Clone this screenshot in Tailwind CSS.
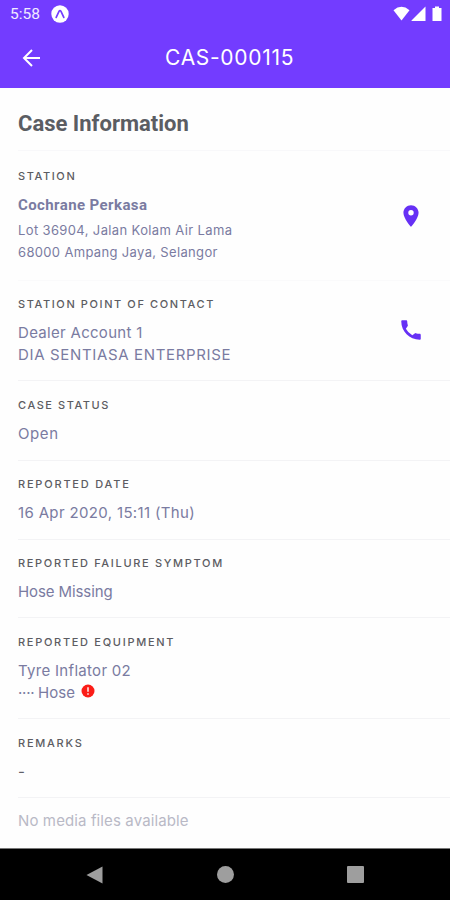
<!DOCTYPE html>
<html lang="en">
<head>
<meta charset="utf-8">
<meta name="viewport" content="width=device-width, initial-scale=1">
<title>CAS-000115</title>
<script src="https://cdn.jsdelivr.net/npm/@tailwindcss/browser@4"></script>
</head>
<body class="bg-white font-['Inter',sans-serif]">
<div class="flex h-[900px] w-[450px] flex-col overflow-hidden bg-[#fefefe]">
  <header class="h-[88px] shrink-0 bg-[#733cff] text-white">
    <div class="flex h-7 items-center pr-[7px] pl-[10px]">
      <span class="font-['Roboto',sans-serif] text-[15.5px] leading-7 text-white/90"><span>5:58</span></span>
      <svg class="ml-[11px]" width="18" height="18" viewBox="0 0 18 18"><circle cx="9" cy="9" r="8.7" fill="#fff"/><path d="M5.2 12.4 8.1 6.2Q9 4.8 9.9 6.2L12.8 12.4" fill="none" stroke="#733cff" stroke-width="1.7" stroke-linecap="round"/></svg>
      <svg class="ml-auto" width="50" height="18" viewBox="0 0 50 18" fill="#fff"><path d="M0.5 5.2Q8.5-1.5 16.500 5.200L8.500 15.500Z"/><path d="M18.500 16V15.500L32.500 1.500V16Z"/><path d="M42 1.500H46V3H48.500V16H39.500V3H42Z"/></svg>
    </div>
    <div class="flex h-[60px] items-center pl-[20px]">
      <svg width="24" height="24" viewBox="0 0 24 24" fill="none" stroke="#fff" stroke-width="2"><path d="M20 12H4M12 4 4 12 12 20"/></svg>
      <h1 class="ml-[121px] text-[21px] font-normal tracking-[0.7px]"><span>CAS-000115</span></h1>
    </div>
  </header>
  <main class="h-[760px] shrink-0 text-[15px] leading-[22px] text-[#7a7ba1]">
    <div class="ml-[18px] flex h-[63px] items-center border-b border-[#f8f8fa] pt-[9px] font-['Roboto',sans-serif] text-[22px] font-bold text-[#5b5d63]"><h2>Case Information</h2></div>
    <section class="ml-[18px] flex h-[130px] border-b border-[#fafafb] pt-[17px]">
      <div>
        <h3 class="text-[11px] leading-4 font-medium tracking-[1.6px] text-[#5c5c62]"><span>STATION</span></h3>
        <p class="mt-[10px] font-['Roboto',sans-serif] font-bold tracking-[0.4px]"><span>Cochrane Perkasa</span></p>
        <p class="mt-[3px] text-[13px] tracking-[0.37px]"><span>Lot 36904, Jalan Kolam Air Lama</span></p>
        <p class="text-[13px] tracking-[0.34px]"><span>68000 Ampang Jaya, Selangor</span></p>
      </div>
      <svg class="mt-[35px] mr-[26px] ml-auto" width="26" height="26" viewBox="0 0 24 24" fill="#6630f5"><path d="M12 2C8.130 2 5 5.130 5 9c0 5.250 7 13 7 13s7-7.750 7-13c0-3.870-3.130-7-7-7zm0 9.500a2.500 2.500 0 1 1 0-5 2.500 2.500 0 0 1 0 5z"/></svg>
    </section>
    <section class="ml-[18px] flex h-[100px] border-b border-[#f3f3f5] pt-[15px]">
      <div>
        <h3 class="text-[11px] leading-4 font-medium tracking-[1.6px] text-[#5c5c62]"><span>STATION POINT OF CONTACT</span></h3>
        <p class="mt-[10px] tracking-[0.3px]"><span>Dealer Account 1</span></p>
        <p class="tracking-[0.65px]"><span>DIA SENTIASA ENTERPRISE</span></p>
      </div>
      <svg class="mt-[21px] mr-[26px] ml-auto" width="26" height="26" viewBox="0 0 24 24" fill="#6630f5"><path d="M20 15.500c-1.250 0-2.450-.2-3.570-.57a1 1 0 0 0-1.020.24l-2.200 1.600A15.050 15.050 0 0 1 7.250 10.800L8.820 8.600a1 1 0 0 0 .25-1.020A11.360 11.360 0 0 1 8.500 4c0-.55-.45-1-1-1H4c-.55 0-1 .45-1 1 0 9.390 7.610 17 17 17 .55 0 1-.45 1-1v-3.500c0-.55-.45-1-1-1z"/></svg>
    </section>
    <section class="ml-[18px] h-[80px] border-b border-[#f3f3f5] pt-4">
      <h3 class="text-[11px] leading-4 font-medium tracking-[1.55px] text-[#5c5c62]"><span>CASE STATUS</span></h3>
      <p class="mt-[10px] tracking-[0.6px]"><span>Open</span></p>
    </section>
    <section class="ml-[18px] h-[79px] border-b border-[#f3f3f5] pt-[15px]">
      <h3 class="text-[11px] leading-4 font-medium tracking-[1.8px] text-[#5c5c62]"><span>REPORTED DATE</span></h3>
      <p class="mt-[10px] tracking-[0.35px]"><span>16 Apr 2020, 15:11 (Thu)</span></p>
    </section>
    <section class="ml-[18px] h-[78px] border-b border-[#f3f3f5] pt-[15px]">
      <h3 class="text-[11px] leading-4 font-medium tracking-[1.68px] text-[#5c5c62]"><span>REPORTED FAILURE SYMPTOM</span></h3>
      <p class="mt-[10px] tracking-[-0.1px]"><span>Hose Missing</span></p>
    </section>
    <section class="ml-[18px] h-[101px] border-b border-[#f3f3f5] pt-4">
      <h3 class="text-[11px] leading-4 font-medium tracking-[1.7px] text-[#5c5c62]"><span>REPORTED EQUIPMENT</span></h3>
      <p class="mt-[10px] tracking-[0.3px]"><span>Tyre Inflator 02</span></p>
      <p class="flex"><span class="w-[20px] tracking-[-0.2px]">····</span><span class="w-[43px] tracking-[0.1px]">Hose</span><svg class="mt-[2px]" width="14" height="14" viewBox="0 0 14 14"><circle cx="7" cy="7" r="6.500" fill="#fb1d17"/><path d="M7 3.200V7.800M7 9.200V10.700" stroke="#fff" stroke-width="1.400"/></svg></p>
    </section>
    <section class="ml-[18px] h-[79px] border-b border-[#f3f3f5] pt-4">
      <h3 class="text-[11px] leading-4 font-medium tracking-[1.75px] text-[#5c5c62]"><span>REMARKS</span></h3>
      <p class="mt-[10px] text-[#606068]"><span>-</span></p>
    </section>
    <p class="ml-[18px] pt-[12px] tracking-[0.12px] text-[#b9b9c6]"><span>No media files available</span></p>
  </main>
  <nav class="flex h-[52px] shrink-0 items-center justify-between border-t border-[#777] bg-black pr-[86px] pl-[86px]">
    <svg width="17" height="18" viewBox="0 0 17 18"><path d="M0.500 9 16.500 0.500V17.500Z" fill="#9e9e9e"/></svg>
    <span class="size-[17px] rounded-full bg-[#9e9e9e]"></span>
    <span class="size-[17px] rounded-[1px] bg-[#9e9e9e]"></span>
  </nav>
</div>
</body>
</html>
